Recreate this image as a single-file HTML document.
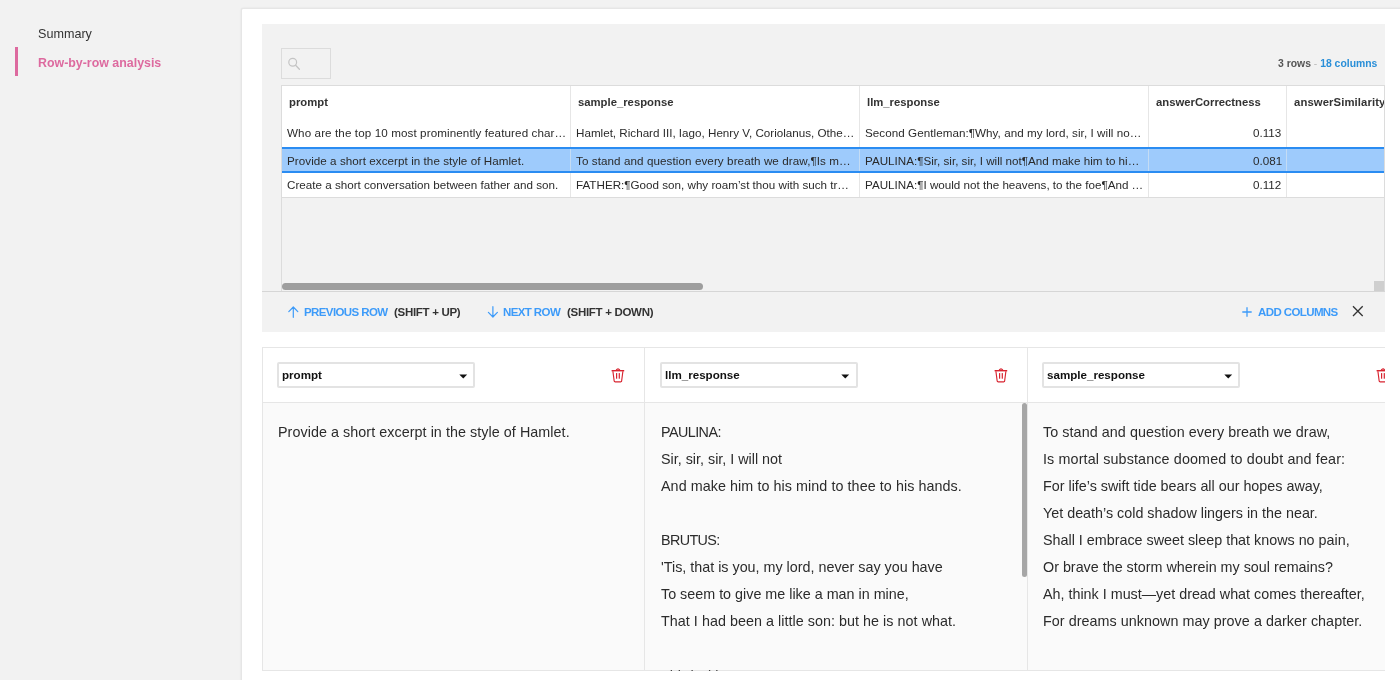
<!DOCTYPE html>
<html><head><meta charset="utf-8">
<style>
*{box-sizing:border-box;margin:0;padding:0}
html,body{width:1400px;height:680px;overflow:hidden;-webkit-font-smoothing:antialiased;background:#f2f2f2;font-family:"Liberation Sans",sans-serif;color:#333}
.a{position:absolute;white-space:nowrap}
.t{position:absolute;white-space:nowrap;line-height:1}
.body{font-size:14.33px;color:#2b2b2b}
</style></head><body>
<div id="root" style="position:absolute;left:0;top:0;width:1400px;height:680px;will-change:transform;background:#f2f2f2">
<!-- sidebar -->
<div class="t" style="left:38px;top:27.5px;font-size:12.6px;color:#333">Summary</div>
<div style="position:absolute;left:15px;top:47px;width:3px;height:29px;background:#dd6a9f"></div>
<div class="t" style="left:38px;top:56.5px;font-size:12.4px;font-weight:bold;color:#dd6a9f">Row-by-row analysis</div>

<!-- white panel -->
<div style="position:absolute;left:241px;top:8px;width:1200px;height:700px;background:#fff;border:1px solid #e6e6e6;box-shadow:0 0 2px rgba(0,0,0,0.09);border-radius:2px;"></div>

<!-- gray inner panel -->
<div style="position:absolute;left:262px;top:24px;width:1123px;height:308px;background:#f2f2f2"></div>

<!-- search box -->
<div style="position:absolute;left:281px;top:48px;width:50px;height:31px;border:1px solid #dcdcdc"></div>
<svg class="a" style="left:284px;top:54px" width="20" height="20" viewBox="284 54 20 20">
<circle cx="292.7" cy="62.3" r="3.9" fill="none" stroke="#c4c4c4" stroke-width="1.2"/>
<line x1="295.6" y1="65.3" x2="299.4" y2="69.2" stroke="#c4c4c4" stroke-width="1.3" stroke-linecap="round"/>
</svg>

<div class="t" style="left:1278px;top:58.5px;font-size:10.4px;font-weight:bold;color:#555">3 rows <span style="color:#bbb;font-weight:normal">-</span> <span style="color:#2a8fd8">18 columns</span></div>

<!-- table -->
<div style="position:absolute;left:281px;top:85px;width:1104px;height:113px;background:#fff;border:1px solid #dcdcdc;border-right:none"></div>
<!-- left line continuing below table -->
<div style="position:absolute;left:281px;top:198px;width:1px;height:93px;background:#dcdcdc"></div>
<div style="position:absolute;left:1384px;top:85px;width:1px;height:206px;background:#dcdcdc"></div>
<!-- column dividers -->
<div style="position:absolute;left:570px;top:86px;width:1px;height:111px;background:#e6e6e6"></div>
<div style="position:absolute;left:859px;top:86px;width:1px;height:111px;background:#e6e6e6"></div>
<div style="position:absolute;left:1148px;top:86px;width:1px;height:111px;background:#e6e6e6"></div>
<div style="position:absolute;left:1286px;top:86px;width:1px;height:111px;background:#e6e6e6"></div>
<!-- selected row -->
<div style="position:absolute;left:282px;top:147px;width:1102px;height:26px;background:#9ecbfc;border-top:2px solid #2a8cf2;border-bottom:2px solid #2a8cf2"></div>
<div style="position:absolute;left:570px;top:149px;width:1px;height:22px;background:#c4dcf4"></div>
<div style="position:absolute;left:859px;top:149px;width:1px;height:22px;background:#c4dcf4"></div>
<div style="position:absolute;left:1148px;top:149px;width:1px;height:22px;background:#c4dcf4"></div>
<div style="position:absolute;left:1286px;top:149px;width:1px;height:22px;background:#c4dcf4"></div>

<!-- headers -->
<div class="t" style="left:289px;top:97.3px;font-size:11.3px;font-weight:bold">prompt</div>
<div class="t" style="left:578px;top:97.3px;font-size:11.3px;font-weight:bold">sample_response</div>
<div class="t" style="left:867px;top:97.3px;font-size:11.3px;font-weight:bold">llm_response</div>
<div class="t" style="left:1156px;top:97.3px;font-size:11.3px;font-weight:bold">answerCorrectness</div>
<div style="position:absolute;left:1287px;top:86px;width:97px;height:30px;overflow:hidden"><div class="t" style="left:7px;top:11.3px;font-size:11.3px;font-weight:bold;letter-spacing:0.1px">answerSimilarity</div></div>

<!-- rows -->
<div class="t" style="left:287px;top:127px;font-size:11.65px;color:#2a2a2a;letter-spacing:0.1px">Who are the top 10 most prominently featured char…</div>
<div class="t" style="left:576px;top:127px;font-size:11.65px;color:#2a2a2a">Hamlet, Richard III, Iago, Henry V, Coriolanus, Othe…</div>
<div class="t" style="left:865px;top:127px;font-size:11.65px;color:#2a2a2a;letter-spacing:0.05px">Second Gentleman:¶Why, and my lord, sir, I will no…</div>
<div class="t" style="left:1253px;top:127px;font-size:11.65px;color:#2a2a2a">0.113</div>

<div class="t" style="left:287px;top:155px;font-size:11.65px;color:#2a2a2a;letter-spacing:0.05px">Provide a short excerpt in the style of Hamlet.</div>
<div class="t" style="left:576px;top:155px;font-size:11.65px;color:#2a2a2a;letter-spacing:0.08px">To stand and question every breath we draw,¶Is m…</div>
<div class="t" style="left:865px;top:155px;font-size:11.65px;color:#2a2a2a">PAULINA:¶Sir, sir, sir, I will not¶And make him to hi…</div>
<div class="t" style="left:1253px;top:155px;font-size:11.65px;color:#2a2a2a">0.081</div>

<div class="t" style="left:287px;top:179px;font-size:11.65px;color:#2a2a2a">Create a short conversation between father and son.</div>
<div class="t" style="left:576px;top:179px;font-size:11.65px;color:#2a2a2a">FATHER:¶Good son, why roam’st thou with such tr…</div>
<div class="t" style="left:865px;top:179px;font-size:11.65px;color:#2a2a2a">PAULINA:¶I would not the heavens, to the foe¶And …</div>
<div class="t" style="left:1253px;top:179px;font-size:11.65px;color:#2a2a2a">0.112</div>

<!-- scrollbars -->
<div style="position:absolute;left:282px;top:283px;width:421px;height:7px;border-radius:3.5px;background:#9e9e9e"></div>
<div style="position:absolute;left:1374px;top:281px;width:10px;height:10px;background:#cfcfcf"></div>
<div style="position:absolute;left:262px;top:291px;width:1123px;height:1px;background:#d6d6d6"></div>

<!-- footer -->
<svg class="a" style="left:284px;top:302px" width="20" height="20" viewBox="284 302 20 20">
<path d="M293.3 307.2 V317.3 M288.8 311.6 L293.3 307 L297.8 311.6" fill="none" stroke="#3d9bf9" stroke-width="1.2" stroke-linecap="round" stroke-linejoin="round"/>
</svg>
<div class="t" style="left:304px;top:307px;font-size:11.5px;font-weight:bold;color:#3d9bf9;letter-spacing:-0.6px">PREVIOUS ROW</div>
<div class="t" style="left:394px;top:307px;font-size:11.5px;font-weight:bold;color:#333;letter-spacing:-0.3px">(SHIFT + UP)</div>
<svg class="a" style="left:484px;top:302px" width="20" height="20" viewBox="484 302 20 20">
<path d="M492.9 306.7 V316.8 M488.4 312.4 L492.9 317 L497.4 312.4" fill="none" stroke="#3d9bf9" stroke-width="1.2" stroke-linecap="round" stroke-linejoin="round"/>
</svg>
<div class="t" style="left:503px;top:307px;font-size:11.5px;font-weight:bold;color:#3d9bf9;letter-spacing:-0.6px">NEXT ROW</div>
<div class="t" style="left:567px;top:307px;font-size:11.5px;font-weight:bold;color:#333;letter-spacing:-0.3px">(SHIFT + DOWN)</div>

<svg class="a" style="left:1238px;top:302px" width="20" height="20" viewBox="1238 302 20 20">
<path d="M1242.3 312 H1251.7 M1247 307.2 V316.8" fill="none" stroke="#3d9bf9" stroke-width="1.3"/>
</svg>
<div class="t" style="left:1258px;top:307px;font-size:11.5px;font-weight:bold;color:#3d9bf9;letter-spacing:-0.6px">ADD COLUMNS</div>
<svg class="a" style="left:1348px;top:302px" width="20" height="20" viewBox="1348 302 20 20">
<path d="M1353 306.3 L1362.7 316 M1362.7 306.3 L1353 316" fill="none" stroke="#333" stroke-width="1.3"/>
</svg>

<!-- compare section -->
<div style="position:absolute;left:262px;top:347px;width:1123px;height:324px;overflow:hidden">
  <div style="position:absolute;left:0;top:0;width:1200px;height:324px;border:1px solid #e6e6e6;"></div>
  <div style="position:absolute;left:1px;top:55px;width:1200px;height:268px;background:#fafafa;border-top:1px solid #e6e6e6"></div>
  <div style="position:absolute;left:382px;top:0;width:0;height:324px;border-left:1px solid #e6e6e6"></div>
  <div style="position:absolute;left:765px;top:0;width:0;height:324px;border-left:1px solid #e6e6e6"></div>
  <div style="position:absolute;left:15px;top:15px;width:198px;height:26px;background:#fff;border:2px solid #e3e3e3;border-radius:2px"></div>
  <div class="t" style="left:20px;top:22.4px;font-size:11.6px;font-weight:bold;color:#111">prompt</div>
  <svg class="a" style="left:197px;top:27px" width="9" height="6" viewBox="0 0 9 6"><path d="M0.3 0.6 H8.2 L4.25 4.6 Z" fill="#111"/></svg>
  <svg class="a" style="left:349px;top:20px" width="14" height="16" viewBox="0 0 14 16"><path d="M5.2 3.2 Q7 0.6 8.8 3.2" fill="none" stroke="#d8232f" stroke-width="1.2"/><rect x="0.6" y="3" width="12.6" height="1.4" fill="#d8232f"/><path d="M1.9 4.2 L3.2 14.2 Q3.4 14.9 4.1 14.9 H9.7 Q10.4 14.9 10.6 14.2 L11.9 4.2" fill="none" stroke="#d8232f" stroke-width="1.15"/><rect x="5" y="6.1" width="1.2" height="5.6" fill="#d8232f"/><rect x="7.7" y="6.1" width="1.2" height="5.6" fill="#d8232f"/></svg>
  <div style="position:absolute;left:398px;top:15px;width:198px;height:26px;background:#fff;border:2px solid #e3e3e3;border-radius:2px"></div>
  <div class="t" style="left:403px;top:22.4px;font-size:11.6px;font-weight:bold;color:#111">llm_response</div>
  <svg class="a" style="left:579px;top:27px" width="9" height="6" viewBox="0 0 9 6"><path d="M0.3 0.6 H8.2 L4.25 4.6 Z" fill="#111"/></svg>
  <svg class="a" style="left:732px;top:20px" width="14" height="16" viewBox="0 0 14 16"><path d="M5.2 3.2 Q7 0.6 8.8 3.2" fill="none" stroke="#d8232f" stroke-width="1.2"/><rect x="0.6" y="3" width="12.6" height="1.4" fill="#d8232f"/><path d="M1.9 4.2 L3.2 14.2 Q3.4 14.9 4.1 14.9 H9.7 Q10.4 14.9 10.6 14.2 L11.9 4.2" fill="none" stroke="#d8232f" stroke-width="1.15"/><rect x="5" y="6.1" width="1.2" height="5.6" fill="#d8232f"/><rect x="7.7" y="6.1" width="1.2" height="5.6" fill="#d8232f"/></svg>
  <div style="position:absolute;left:780px;top:15px;width:198px;height:26px;background:#fff;border:2px solid #e3e3e3;border-radius:2px"></div>
  <div class="t" style="left:785px;top:22.4px;font-size:11.6px;font-weight:bold;color:#111">sample_response</div>
  <svg class="a" style="left:962px;top:27px" width="9" height="6" viewBox="0 0 9 6"><path d="M0.3 0.6 H8.2 L4.25 4.6 Z" fill="#111"/></svg>
  <svg class="a" style="left:1114px;top:20px" width="14" height="16" viewBox="0 0 14 16"><path d="M5.2 3.2 Q7 0.6 8.8 3.2" fill="none" stroke="#d8232f" stroke-width="1.2"/><rect x="0.6" y="3" width="12.6" height="1.4" fill="#d8232f"/><path d="M1.9 4.2 L3.2 14.2 Q3.4 14.9 4.1 14.9 H9.7 Q10.4 14.9 10.6 14.2 L11.9 4.2" fill="none" stroke="#d8232f" stroke-width="1.15"/><rect x="5" y="6.1" width="1.2" height="5.6" fill="#d8232f"/><rect x="7.7" y="6.1" width="1.2" height="5.6" fill="#d8232f"/></svg>
  <div class="t body" style="left:16px;top:78px;letter-spacing:0.055px">Provide a short excerpt in the style of Hamlet.</div>
  <div class="t body" style="left:399px;top:78px;letter-spacing:-0.55px">PAULINA:</div>
  <div class="t body" style="left:399px;top:105px">Sir, sir, sir, I will not</div>
  <div class="t body" style="left:399px;top:132px;letter-spacing:0.065px">And make him to his mind to thee to his hands.</div>
  <div class="t body" style="left:399px;top:186px;letter-spacing:-0.6px">BRUTUS:</div>
  <div class="t body" style="left:399px;top:213px">'Tis, that is you, my lord, never say you have</div>
  <div class="t body" style="left:399px;top:240px">To seem to give me like a man in mine,</div>
  <div class="t body" style="left:399px;top:267px;letter-spacing:0.04px">That I had been a little son: but he is not what.</div>
  <div class="t body" style="left:399px;top:321.5px;color:#444">Third Citizen:</div>
  <div class="t body" style="left:781px;top:78px;letter-spacing:0.07px">To stand and question every breath we draw,</div>
  <div class="t body" style="left:781px;top:105px;letter-spacing:0.13px">Is mortal substance doomed to doubt and fear:</div>
  <div class="t body" style="left:781px;top:132px">For life’s swift tide bears all our hopes away,</div>
  <div class="t body" style="left:781px;top:159px">Yet death’s cold shadow lingers in the near.</div>
  <div class="t body" style="left:781px;top:186px">Shall I embrace sweet sleep that knows no pain,</div>
  <div class="t body" style="left:781px;top:213px">Or brave the storm wherein my soul remains?</div>
  <div class="t body" style="left:781px;top:240px">Ah, think I must—yet dread what comes thereafter,</div>
  <div class="t body" style="left:781px;top:267px;letter-spacing:0.05px">For dreams unknown may prove a darker chapter.</div>
  <div style="position:absolute;left:760px;top:56px;width:5px;height:174px;border-radius:3px;background:#a6a6a6"></div>
</div>
</div>
</body></html>
